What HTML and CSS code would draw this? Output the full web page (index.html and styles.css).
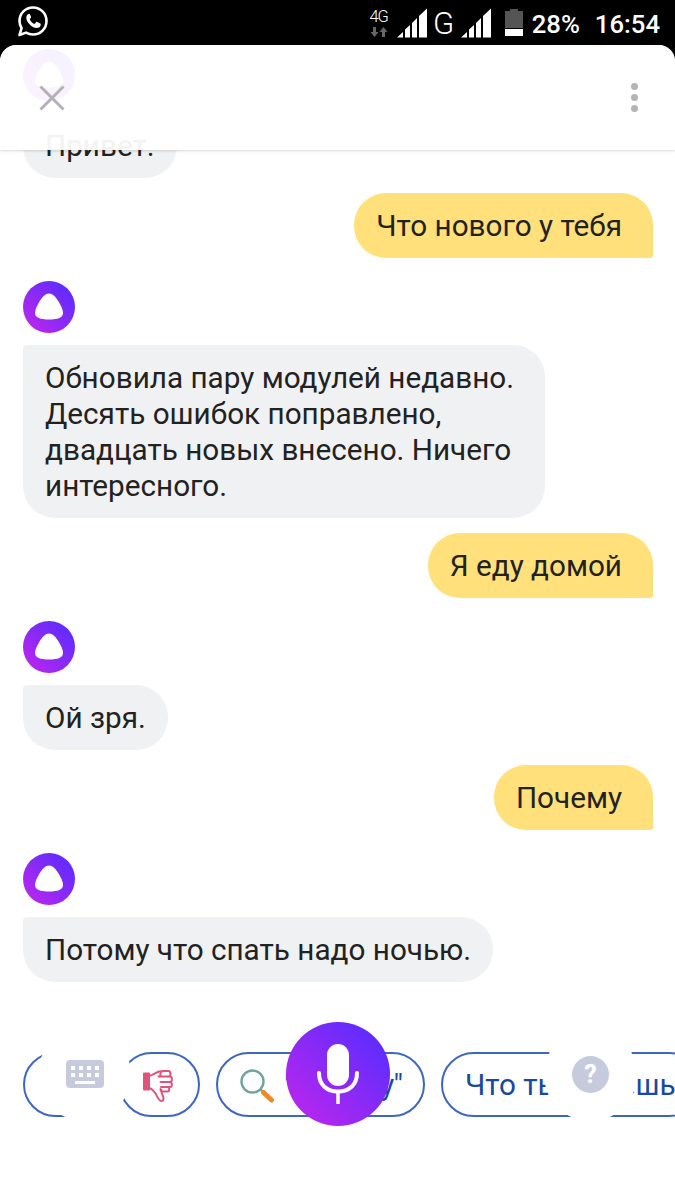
FILE: index.html
```html
<!DOCTYPE html>
<html lang="ru">
<head>
<meta charset="utf-8">
<title>Алиса</title>
<link rel="stylesheet" href="styles.css">
</head>
<body>
<svg class="defs" width="0" height="0">
  <defs>
    <linearGradient id="alice" x1="1" y1="0" x2="0" y2="1">
      <stop offset="0" stop-color="#4f2dff"/>
      <stop offset="1" stop-color="#c426ec"/>
    </linearGradient>
    <symbol id="avatar" viewBox="0 0 52 52">
      <circle cx="26" cy="26" r="26" fill="url(#alice)"/>
      <path fill="#fff" d="M26 12.500C29.500 12.500 32.500 15.500 35.500 20.500C38.500 25.500 40 29 40 32C40 36.500 35 38.500 26 38.500C17 38.500 12 36.500 12 32C12 29 13.500 25.500 16.500 20.500C19.500 15.500 22.500 12.500 26 12.500Z"/>
    </symbol>
    <symbol id="thumb" viewBox="0 0 30 32">
      <g fill="none" stroke="#e0547c" stroke-width="2" stroke-linejoin="round" stroke-linecap="round">
        <path fill="#e0547c" d="M1 3.500H6V19.500H1Z"/>
        <path d="M6 6C10 5 13 2.500 16 1.500L22 1M6 17.500C9 19 11 21 12.500 23.500C14.500 27 16 31 18.500 31C21 31 21 27.500 19.500 25C18.500 23 18 21.500 18.500 20"/>
        <path d="M15.500 6.500H26C28 6.500 28 1 25.500 1H20C17.500 1 16.500 4.500 18 6.500M16.500 6.500H27C29.500 6.500 29.500 12 27 12H17.500M17.500 12H27C29.500 12 29.500 17 27 17H18M18 17H24.500C26.800 17 26.800 21.500 24.500 21.500H20C18.500 21.500 17.500 20.500 17.500 19"/>
      </g>
    </symbol>
  </defs>
</svg>

<div class="screen">
  <header class="statusbar">
    <svg class="wa" viewBox="0 0 32 32" width="32" height="32">
      <path fill="none" stroke="#fff" stroke-width="2.600" stroke-linejoin="round" d="M2.500 30L4.600 23.200C3.200 21 2.500 18.600 2.500 16C2.500 8.500 8.500 2.500 16 2.500S29.500 8.500 29.500 16 23.500 29.500 16 29.500C13.500 29.500 11.100 28.800 9 27.600Z"/>
      <path fill="#fff" d="M12.300 8.800C11.800 8.800 11.200 8.900 10.700 9.500C10 10.200 9.300 11.300 9.300 12.900C9.400 15 10.500 17 12.300 19C14.600 21.500 17.200 22.900 19.800 23C21.500 23 23 22 23.500 20.700C23.800 19.800 23.800 19 23.600 18.800C22.800 18.100 21 17.200 20 16.900C19.600 16.800 19.300 16.900 19 17.300C18.700 17.800 18.300 18.400 17.900 18.700C17.600 18.900 17.300 18.900 16.900 18.700C15 17.800 13.800 16.500 12.900 14.800C12.700 14.400 12.700 14.200 13 13.800C13.400 13.400 13.800 12.900 14 12.500C14.100 12.200 14.100 11.900 14 11.600C13.700 10.800 13.300 9.900 12.900 9.200C12.800 9 12.600 8.800 12.300 8.800Z"/>
    </svg>
    <div class="status-right">
      <div class="net">
        <span class="net-label">4G</span>
        <svg class="net-arrows" viewBox="0 0 18 10" width="18" height="10">
          <path fill="#666" d="M3 0H6V5H8.500L4.500 10 .5 5H3ZM12 10H15V5H17.500L13.500 0 9.500 5H12Z"/>
        </svg>
      </div>
      <svg class="signal" viewBox="0 0 30 30" width="30" height="30">
        <path fill="#fff" d="M0 29.500L6 24V29.500ZM8 21.500L13 17V29.500H8ZM15 15L20 10V29.500H15ZM22 8L30 .5V29.500H22Z"/>
      </svg>
      <span class="net-g">G</span>
      <svg class="signal" viewBox="0 0 30 30" width="30" height="30">
        <path fill="#fff" d="M0 29.500L6 24V29.500ZM8 21.500L13 17V29.500H8ZM15 15L20 10V29.500H15ZM22 8L30 .5V29.500H22Z"/>
      </svg>
      <svg class="battery" viewBox="0 0 18 27" width="18" height="27">
        <path fill="#555" d="M5 0H13V2H18V19H0V2H5Z"/>
        <path fill="#fff" d="M0 20H18V27H0Z"/>
      </svg>
      <span class="percent">28%</span>
      <span class="clock">16:54</span>
    </div>
  </header>

  <main class="panel">
    <div class="chat">
      <svg class="avatar first"><use href="#avatar"/></svg>
      <div class="bubble alice">Привет.</div>
      <div class="bubble user">Что нового у тебя</div>
      <svg class="avatar"><use href="#avatar"/></svg>
      <div class="bubble alice">Обновила пару модулей недавно. Десять ошибок поправлено, двадцать новых внесено. Ничего интересного.</div>
      <div class="bubble user">Я еду домой</div>
      <svg class="avatar"><use href="#avatar"/></svg>
      <div class="bubble alice">Ой зря.</div>
      <div class="bubble user">Почему</div>
      <svg class="avatar"><use href="#avatar"/></svg>
      <div class="bubble alice">Потому что спать надо ночью.</div>
    </div>

    <div class="chips">
      <div class="chip icon-chip"><svg class="thumb-icon"><use href="#thumb"/></svg></div>
      <div class="chip icon-chip"><svg class="thumb-icon"><use href="#thumb"/></svg></div>
      <div class="chip search-chip">
        <svg class="lens" viewBox="0 0 34 34" width="34" height="34">
          <circle cx="12.500" cy="12.500" r="11" fill="none" stroke="#6fa39f" stroke-width="2.400"/>
          <path d="M20.500 20.500L23 23" stroke="#6fa39f" stroke-width="2.400"/>
          <path d="M23.500 23.500L31.500 31" stroke="#ee8a2a" stroke-width="5" stroke-linecap="round"/>
        </svg>
        <span class="search-text">"Почему"</span>
      </div>
      <div class="chip text-chip">Что ты умеешь</div>
    </div>

    <div class="header">
      <svg class="close" viewBox="0 0 26 26" width="26" height="26">
        <path d="M1.500 1.500L24.500 24.500M24.500 1.500L1.500 24.500" stroke="#b4b1b6" stroke-width="3"/>
      </svg>
      <div class="menu"><i></i><i></i><i></i></div>
    </div>

    <div class="mask mask-left">
      <svg class="keyboard" viewBox="0 0 38 28" width="38" height="28">
        <rect width="38" height="28" rx="4" fill="#c5cbdc"/>
        <g fill="#fff">
          <rect x="5" y="6" width="4" height="4"/><rect x="13" y="6" width="4" height="4"/><rect x="21" y="6" width="4" height="4"/><rect x="29" y="6" width="4" height="4"/>
          <rect x="5" y="13" width="4" height="4"/><rect x="13" y="13" width="4" height="4"/><rect x="21" y="13" width="4" height="4"/><rect x="29" y="13" width="4" height="4"/>
          <rect x="9" y="21" width="20" height="3"/>
        </g>
      </svg>
    </div>
    <div class="mask mask-right"><span class="help">?</span></div>

    <div class="mic">
      <svg viewBox="0 0 42 60" width="42" height="60">
        <rect x="10" y="0" width="22" height="42" rx="11" fill="#fff"/>
        <path d="M2 29C2 41 10 47.500 21 47.500S40 41 40 29" fill="none" stroke="#fff" stroke-width="4" stroke-linecap="round"/>
        <path d="M21 47V60" stroke="#fff" stroke-width="3.500"/>
      </svg>
    </div>
  </main>
</div>
</body>
</html>
```

FILE: styles.css
```css
* { box-sizing: border-box; }

html, body {
  margin: 0;
  padding: 0;
  background: #000;
}

.defs { position: absolute; }

.screen {
  width: 675px;
  height: 1200px;
  overflow: hidden;
  font-family: Roboto, "Noto Sans", sans-serif;
  background: #000;
}

/* status bar */
.statusbar {
  height: 45px;
  display: flex;
  align-items: center;
  justify-content: space-between;
  padding: 0 15px 0 17px;
  color: #fff;
}

.wa { display: block; margin-top: -3px; }

.status-right {
  display: flex;
  align-items: center;
  height: 100%;
}

.net {
  width: 18px;
  margin-right: 9px;
  display: flex;
  flex-direction: column;
  align-items: center;
  gap: 2px;
}

.net-label {
  font-size: 16.500px;
  font-weight: 300;
  line-height: 16px;
  letter-spacing: -1px;
}

.net-arrows { display: block; }

.signal { display: block; margin-top: 1px; }

.net-g {
  font-weight: 300;
  font-size: 31px;
  line-height: 30px;
  width: 34px;
  text-align: center;
  margin-top: 2px;
}

.battery { display: block; margin: 0 9px 0 14px; }

.percent, .clock {
  font-size: 25.700px;
  line-height: 30px;
  font-weight: 500;
  margin-top: 2px;
}

.clock { margin-left: 15px; }

/* panel */
.panel {
  position: relative;
  height: 1155px;
  background: #fff;
  border-radius: 16px 16px 0 0;
  overflow: hidden;
}

.chat {
  display: flex;
  flex-direction: column;
  align-items: flex-start;
  padding: 4px 22px 0 23px;
}

.avatar {
  display: block;
  width: 52px;
  height: 52px;
  margin-top: 23px;
  flex: none;
}

.avatar.first { margin-top: 0; }

.bubble {
  font-size: 29.700px;
  line-height: 36px;
  color: #222;
}

.bubble.alice {
  background: #f0f1f3;
  border-radius: 4px 32px 32px 32px;
  margin-top: 12px;
  padding: 14.500px 22px;
  max-width: 522px;
}

.bubble.user {
  align-self: flex-end;
  background: #ffe07b;
  border-radius: 32px 32px 3px 32px;
  margin-top: 15px;
  padding: 14.500px 31px 14.500px 22px;
}

/* chips */
.chips {
  display: flex;
  gap: 16px;
  margin-top: 70px;
  padding-left: 23px;
  white-space: nowrap;
}

.chip {
  flex: none;
  height: 65px;
  border: 2px solid #3c66c2;
  border-radius: 33px;
  display: flex;
  align-items: center;
  color: #17499f;
  font-size: 29.700px;
  background: #fff;
}

.icon-chip { width: 81px; padding-left: 22px; }
.icon-chip:first-child { width: 80px; }

.thumb-icon { width: 30px; height: 32px; display: block; margin-top: 2px; }

.search-chip { width: 209px; padding-left: 22px; gap: 10px; }

.search-text { letter-spacing: -0.900px; }

.lens { flex: none; margin-top: 3px; }

.text-chip { padding: 0 24px 0 22px; }

/* overlays */
.header {
  position: absolute;
  top: 0;
  left: 0;
  right: 0;
  height: 105px;
  background: rgba(255, 255, 255, 0.94);
  border-radius: 16px 16px 0 0;
  box-shadow: 0 1px 3px rgba(0, 0, 0, 0.16);
  display: flex;
  align-items: center;
  justify-content: space-between;
  padding: 0 37px 0 39px;
}

.close { display: block; }

.menu {
  display: flex;
  flex-direction: column;
  gap: 4px;
}

.menu i {
  display: block;
  width: 7px;
  height: 7px;
  border-radius: 50%;
  background: #b4b4b4;
}

.mask {
  position: absolute;
  width: 93px;
  height: 93px;
  border-radius: 50%;
  background: #fff;
  display: flex;
  align-items: center;
  justify-content: center;
}

.mask-left { left: 38px; top: 983px; }
.mask-right { left: 544px; top: 983px; }

.keyboard { display: block; margin-top: -1px; }

.help {
  width: 37px;
  height: 37px;
  border-radius: 50%;
  background: #c5cbdc;
  color: #fff;
  font-size: 25px;
  font-weight: 700;
  line-height: 37px;
  text-align: center;
}

.mic {
  position: absolute;
  left: 286px;
  top: 977px;
  width: 104px;
  height: 104px;
  border-radius: 50%;
  background: linear-gradient(45deg, #c426ec, #4f2dff);
  display: flex;
  align-items: center;
  justify-content: center;
}

.mic svg { display: block; }
```
